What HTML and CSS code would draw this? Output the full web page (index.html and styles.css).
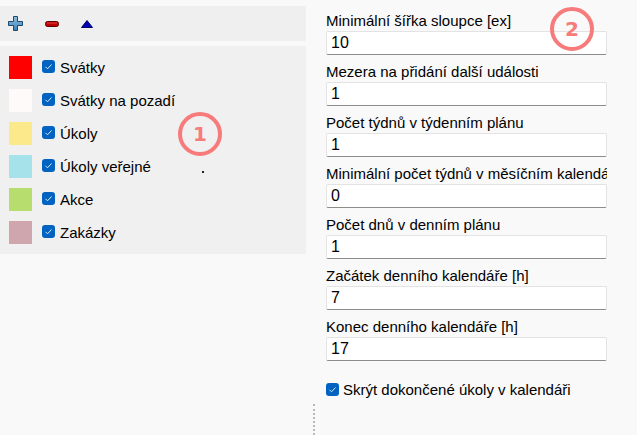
FILE: index.html
```html
<!DOCTYPE html>
<html lang="cs">
<head>
    <meta charset="UTF-8">
    <meta name="viewport" content="width=device-width, initial-scale=1.0">
    <title>Nastavení kalendáře</title>
    <link rel="stylesheet" href="styles.css">
</head>
<body>
    <div class="left">
        <div class="toolbar">
            <svg class="tool" width="16" height="16" viewBox="0 0 16 16">
                <defs>
                    <linearGradient id="plusFill" x1="0" y1="0" x2="0" y2="1">
                        <stop offset="0" stop-color="#8fc0e4"/>
                        <stop offset="1" stop-color="#3f7fae"/>
                    </linearGradient>
                </defs>
                <path d="M5.5 0.5h4v5h5v4h-5v5h-4v-5h-5v-4h5z" fill="url(#plusFill)" stroke="#1d4a6c" stroke-width="1"/>
            </svg>
            <svg class="tool" width="16" height="16" viewBox="0 0 16 16">
                <rect x="1.5" y="5.5" width="13" height="5" rx="2" fill="#c00000" stroke="#5a0000" stroke-width="1"/>
                <rect x="3" y="6.5" width="10" height="1" fill="#e04040"/>
            </svg>
            <svg class="tool" width="14" height="16" viewBox="0 0 14 16">
                <path d="M1.5 11.5L7 4.5l5.5 7z" fill="#0000b4" stroke="#000066" stroke-width="1"/>
            </svg>
        </div>
        <div class="list">
            <div class="row"><span class="swatch sw-red"></span><span class="check"><svg width="13" height="13" viewBox="0 0 13 13"><rect width="13" height="13" rx="3" fill="#0063c2"/><path d="M3.5 6.8l2 2 4-4.3" fill="none" stroke="#dbe8f6" stroke-width="1"/></svg></span>Svátky</div>
            <div class="row"><span class="swatch sw-snow"></span><span class="check"><svg width="13" height="13" viewBox="0 0 13 13"><rect width="13" height="13" rx="3" fill="#0063c2"/><path d="M3.5 6.8l2 2 4-4.3" fill="none" stroke="#dbe8f6" stroke-width="1"/></svg></span>Svátky na pozadí</div>
            <div class="row"><span class="swatch sw-yellow"></span><span class="check"><svg width="13" height="13" viewBox="0 0 13 13"><rect width="13" height="13" rx="3" fill="#0063c2"/><path d="M3.5 6.8l2 2 4-4.3" fill="none" stroke="#dbe8f6" stroke-width="1"/></svg></span>Úkoly</div>
            <div class="row"><span class="swatch sw-cyan"></span><span class="check"><svg width="13" height="13" viewBox="0 0 13 13"><rect width="13" height="13" rx="3" fill="#0063c2"/><path d="M3.5 6.8l2 2 4-4.3" fill="none" stroke="#dbe8f6" stroke-width="1"/></svg></span>Úkoly veřejné</div>
            <div class="row"><span class="swatch sw-green"></span><span class="check"><svg width="13" height="13" viewBox="0 0 13 13"><rect width="13" height="13" rx="3" fill="#0063c2"/><path d="M3.5 6.8l2 2 4-4.3" fill="none" stroke="#dbe8f6" stroke-width="1"/></svg></span>Akce</div>
            <div class="row"><span class="swatch sw-mauve"></span><span class="check"><svg width="13" height="13" viewBox="0 0 13 13"><rect width="13" height="13" rx="3" fill="#0063c2"/><path d="M3.5 6.8l2 2 4-4.3" fill="none" stroke="#dbe8f6" stroke-width="1"/></svg></span>Zakázky</div>
        </div>
    </div>

    <div class="splitter"><div class="grip"></div></div>

    <div class="right">
        <div class="field">
            <div class="label">Minimální šířka sloupce [ex]</div>
            <div class="input">10</div>
        </div>
        <div class="field">
            <div class="label">Mezera na přidání další události</div>
            <div class="input">1</div>
        </div>
        <div class="field">
            <div class="label">Počet týdnů v týdenním plánu</div>
            <div class="input">1</div>
        </div>
        <div class="field">
            <div class="label">Minimální počet týdnů v měsíčním kalendáři</div>
            <div class="input">0</div>
        </div>
        <div class="field">
            <div class="label">Počet dnů v denním plánu</div>
            <div class="input">1</div>
        </div>
        <div class="field">
            <div class="label">Začátek denního kalendáře [h]</div>
            <div class="input">7</div>
        </div>
        <div class="field">
            <div class="label">Konec denního kalendáře [h]</div>
            <div class="input">17</div>
        </div>
        <div class="option"><span class="check"><svg width="13" height="13" viewBox="0 0 13 13"><rect width="13" height="13" rx="3" fill="#0063c2"/><path d="M3.5 6.8l2 2 4-4.3" fill="none" stroke="#dbe8f6" stroke-width="1"/></svg></span>Skrýt dokončené úkoly v kalendáři</div>
    </div>

    <div class="badge badge-one">1</div>
    <div class="badge badge-two">2</div>
    <span class="speck"></span>
</body>
</html>
```

FILE: styles.css
```css
html, body {
    margin: 0;
    padding: 0;
}
body {
    display: flex;
    height: 435px;
    overflow: hidden;
    background-color: #f9f9f9;
    font-family: "Liberation Sans", Arial, sans-serif;
    font-size: 15px;
    color: #000;
    position: relative;
}
.left {
    width: 306px;
    flex: none;
    padding-top: 6px;
    display: flex;
    flex-direction: column;
    gap: 5px;
}
.toolbar {
    height: 35px;
    background: #efefef;
    display: flex;
    align-items: center;
    padding-left: 8px;
    gap: 20px;
}
.tool {
    display: block;
}
.list {
    background: #f0f0f0;
    padding: 10px 0 10px 9px;
    display: flex;
    flex-direction: column;
    gap: 10px;
}
.row {
    display: flex;
    align-items: center;
    height: 23px;
    line-height: 17px;
    white-space: nowrap;
}
.swatch {
    width: 23px;
    height: 23px;
    margin-right: 10px;
    flex: none;
}
.sw-red { background: #ff0000; }
.sw-snow { background: #fffafa; }
.sw-yellow { background: #fce98b; }
.sw-cyan { background: #a6e2ea; }
.sw-green { background: #b6dd6e; }
.sw-mauve { background: #cfa6ad; }
.check {
    width: 13px;
    height: 13px;
    margin-right: 5px;
    flex: none;
    position: relative;
    top: -1px;
}
.check svg {
    display: block;
}
.splitter {
    width: 20px;
    flex: none;
    display: flex;
    align-items: flex-end;
}
.grip {
    width: 0;
    height: 31px;
    margin-left: 7px;
    border-left: 2px dotted #b9b9b9;
}
.right {
    width: 281px;
    flex: none;
    padding-top: 12px;
    overflow: hidden;
}
.field {
    margin-bottom: 8px;
}
.label {
    line-height: 17px;
    height: 17px;
    margin-bottom: 2px;
    white-space: nowrap;
    overflow: hidden;
}
.input {
    box-sizing: border-box;
    height: 24px;
    background: #fff;
    border: 1px solid #e3e3e3;
    border-bottom-color: #8c8c8c;
    border-radius: 2px;
    padding: 0 4px;
    line-height: 22px;
    font-size: 16px;
}
.option {
    margin-top: 20px;
    display: flex;
    align-items: center;
    line-height: 17px;
    white-space: nowrap;
}
.option .check {
    margin-right: 4px;
    top: 0;
}
.badge {
    position: absolute;
    box-sizing: border-box;
    width: 44px;
    height: 44px;
    border: 4px solid #f77b7b;
    border-radius: 50%;
    color: #f77b7b;
    font-family: "DejaVu Sans", sans-serif;
    font-weight: bold;
    font-size: 20px;
    display: flex;
    align-items: center;
    justify-content: center;
}
.badge-one {
    left: 178px;
    top: 112px;
}
.badge-two {
    left: 550px;
    top: 7px;
}
.speck {
    position: absolute;
    left: 202px;
    top: 171px;
    width: 2px;
    height: 2px;
    background: #222;
}
```
